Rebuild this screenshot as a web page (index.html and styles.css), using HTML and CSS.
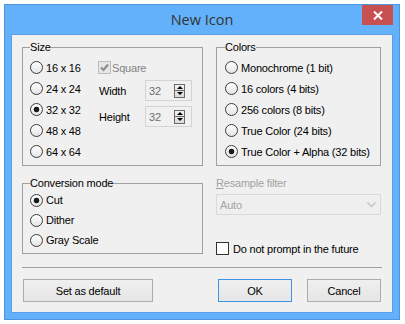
FILE: index.html
```html
<!DOCTYPE html>
<html lang="en">
<head>
    <meta charset="UTF-8">
    <title>New Icon</title>
    <link rel="stylesheet" href="styles.css">
</head>
<body>
    <div class="window">
        <div class="titlebar">
            <span></span>
            <span class="title">New Icon</span>
            <button class="close" title="Close">
                <svg width="10" height="9" viewBox="0 0 10 9">
                    <path d="M1 0.5 L9 8.5 M9 0.5 L1 8.5" stroke="#fff" stroke-width="2" fill="none"/>
                </svg>
            </button>
        </div>

        <div class="client">
            <div class="panels">
                <!-- size -->
                <fieldset class="group size">
                    <legend>Size</legend>
                    <div class="size-body">
                        <div class="options">
                            <label class="opt"><span class="radio"></span>16 x 16</label>
                            <label class="opt"><span class="radio"></span>24 x 24</label>
                            <label class="opt"><span class="radio checked"></span>32 x 32</label>
                            <label class="opt"><span class="radio"></span>48 x 48</label>
                            <label class="opt"><span class="radio"></span>64 x 64</label>
                        </div>
                        <div class="dims">
                            <label class="opt square">
                                <span class="check disabled">
                                    <svg width="9" height="9" viewBox="0 0 9 9">
                                        <path d="M1 4.5 L3.5 7 L8 1.5" stroke="#8a8a8a" stroke-width="2" fill="none"/>
                                    </svg>
                                </span>Square
                            </label>
                            <div class="field">
                                <span class="field-label">Width</span>
                                <div class="spin">
                                    <span class="spin-value">32</span>
                                    <span class="spin-btns">
                                        <span class="spin-btn"><span class="tri up"></span></span>
                                        <span class="spin-btn"><span class="tri down"></span></span>
                                    </span>
                                </div>
                            </div>
                            <div class="field height">
                                <span class="field-label">Height</span>
                                <div class="spin">
                                    <span class="spin-value">32</span>
                                    <span class="spin-btns">
                                        <span class="spin-btn"><span class="tri up"></span></span>
                                        <span class="spin-btn"><span class="tri down"></span></span>
                                    </span>
                                </div>
                            </div>
                        </div>
                    </div>
                </fieldset>

                <!-- colors -->
                <fieldset class="group colors">
                    <legend>Colors</legend>
                    <label class="opt"><span class="radio"></span>Monochrome (1 bit)</label>
                    <label class="opt"><span class="radio"></span>16 colors (4 bits)</label>
                    <label class="opt"><span class="radio"></span>256 colors (8 bits)</label>
                    <label class="opt"><span class="radio"></span>True Color (24 bits)</label>
                    <label class="opt"><span class="radio checked"></span>True Color + Alpha (32 bits)</label>
                </fieldset>

                <!-- conversion -->
                <fieldset class="group mode">
                    <legend>Conversion mode</legend>
                    <label class="opt"><span class="radio checked"></span>Cut</label>
                    <label class="opt"><span class="radio"></span>Dither</label>
                    <label class="opt"><span class="radio"></span>Gray Scale</label>
                </fieldset>

                <div class="resample">
                    <div class="resample-label"><u>R</u>esample filter</div>
                    <div class="combo">
                        <span>Auto</span>
                        <svg width="9" height="6" viewBox="0 0 9 6">
                            <path d="M0.5 0.5 L4.5 4.5 L8.5 0.5" stroke="#c4c4c4" stroke-width="1.5" fill="none"/>
                        </svg>
                    </div>
                    <label class="opt prompt"><span class="check"></span>Do not prompt in the future</label>
                </div>
            </div>

            <hr class="sep">

            <div class="buttons">
                <button class="btn default-btn">Set as default</button>
                <button class="btn ok">OK</button>
                <button class="btn cancel">Cancel</button>
            </div>
        </div>
    </div>
</body>
</html>
```

FILE: styles.css
```css
* {
    box-sizing: border-box;
}

body {
    margin: 0;
    padding: 4px;
    background: #fff;
    font-family: "Liberation Sans", Arial, sans-serif;
    font-size: 11px;
    letter-spacing: -0.2px;
    color: #000;
}

.window {
    width: 396px;
    height: 316px;
    background: #63b1fa;
    border: 1px solid #4d96dc;
    padding: 0 6px 6px;
    display: flex;
    flex-direction: column;
}

.titlebar {
    height: 29px;
    display: grid;
    grid-template-columns: 1fr auto 1fr;
    align-items: start;
}

.title {
    font-family: "Open Sans", "Noto Sans", sans-serif;
    font-size: 14.5px;
    letter-spacing: 0;
    color: #333;
    line-height: 29px;
}

.close {
    justify-self: end;
    width: 31px;
    height: 20px;
    border: none;
    padding: 0;
    background: #c75050;
    display: flex;
    align-items: center;
    justify-content: center;
}

.client {
    flex: 1;
    background: #f0f0f0;
    border: 1px solid #5a9ee6;
    padding: 5px 10px 0 10px;
}

.panels {
    display: grid;
    grid-template-columns: 181px 165px;
    column-gap: 13px;
    row-gap: 10px;
}

.group {
    margin: 0;
    min-width: 0;
    border: 1px solid #a0a0a0;
    padding: 3px 7px 3px 7px;
}

.group legend {
    padding: 0;
    line-height: 14px;
}

.colors {
    padding-left: 8px;
}

.mode {
    padding-top: 0;
    align-self: start;
}

.mode .opt {
    height: 20px;
}

/* radio / check rows */
.opt {
    display: flex;
    align-items: center;
    height: 21px;
    gap: 3px;
    white-space: nowrap;
}

.radio {
    width: 13px;
    height: 13px;
    border-radius: 50%;
    border: 1px solid #3c3c3c;
    background: linear-gradient(#fff, #e4e4e4);
    flex: none;
}

.radio.checked {
    background: radial-gradient(circle, #1a1a1a 2.4px, transparent 3.2px), linear-gradient(#fff, #e4e4e4);
}

.check {
    width: 13px;
    height: 13px;
    border: 1px solid #333;
    background: #fff;
    flex: none;
    display: flex;
    align-items: center;
    justify-content: center;
}

.check.disabled {
    border-color: #bcbcbc;
    background: #e6e6e6;
}

/* size group */
.size-body {
    display: flex;
}

.options {
    width: 68px;
}

.square {
    gap: 1px;
    color: #838383;
}

.field {
    display: flex;
    align-items: center;
    margin-top: 2px;
}

.field.height {
    margin-top: 5px;
}

.field-label {
    width: 47px;
    padding-left: 1px;
}

.spin {
    width: 47px;
    height: 21px;
    border: 1px solid #d3d3d3;
    display: flex;
    align-items: center;
    padding-left: 3px;
}

.spin-value {
    flex: 1;
    color: #6d6d6d;
}

.spin-btns {
    width: 11px;
    height: 14px;
    margin-right: 6px;
    border: 1px solid #6a6a6a;
    display: flex;
    flex-direction: column;
    background: linear-gradient(#f2f2f2, #dcdcdc);
}

.spin-btn {
    flex: 1;
    display: flex;
    align-items: center;
    justify-content: center;
}

.spin-btn + .spin-btn {
    border-top: 1px solid #6a6a6a;
}

.tri {
    width: 0;
    height: 0;
    border-left: 3px solid transparent;
    border-right: 3px solid transparent;
}

.tri.up {
    border-bottom: 3px solid #000;
}

.tri.down {
    border-top: 3px solid #000;
}

/* resample */
.resample-label {
    line-height: 14px;
    color: #a3a3a3;
}

.combo {
    margin-top: 4px;
    height: 21px;
    border: 1px solid #d9d9d9;
    background: #efefef;
    display: flex;
    align-items: center;
    justify-content: space-between;
    padding: 0 4px 0 3px;
    color: #a3a3a3;
}

.prompt {
    height: 13px;
    margin-top: 27px;
    gap: 4px;
}

/* bottom */
.sep {
    margin: 12px 0 0;
    border: none;
    border-top: 1px solid #a0a0a0;
    height: 0;
}

.buttons {
    display: flex;
    margin-top: 11px;
}

.btn {
    height: 23px;
    width: 74px;
    padding: 0;
    font: inherit;
    letter-spacing: inherit;
    color: #000;
    border: 1px solid #acacac;
    background: linear-gradient(#f0f0f0, #e5e5e5);
}

.default-btn {
    width: 130px;
    margin-left: 1px;
}

.ok {
    margin-left: auto;
    border-color: #3d94e5;
}

.cancel {
    margin-left: 15px;
    margin-right: 1px;
}
```
